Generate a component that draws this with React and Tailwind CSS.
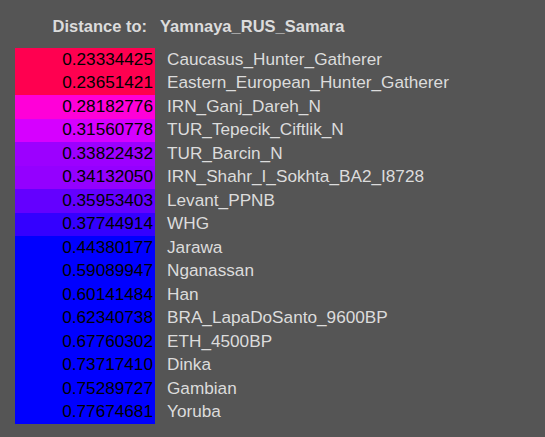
const target = 'Yamnaya_RUS_Samara'

const rows = [
  { d: '0.23334425', name: 'Caucasus_Hunter_Gatherer', bg: 'bg-[#ff0050]' },
  { d: '0.23651421', name: 'Eastern_European_Hunter_Gatherer', bg: 'bg-[#ff0050]' },
  { d: '0.28182776', name: 'IRN_Ganj_Dareh_N', bg: 'bg-[#ff00d8]' },
  { d: '0.31560778', name: 'TUR_Tepecik_Ciftlik_N', bg: 'bg-[#d600ff]' },
  { d: '0.33822432', name: 'TUR_Barcin_N', bg: 'bg-[#9c00ff]' },
  { d: '0.34132050', name: 'IRN_Shahr_I_Sokhta_BA2_I8728', bg: 'bg-[#9400ff]' },
  { d: '0.35953403', name: 'Levant_PPNB', bg: 'bg-[#6400ff]' },
  { d: '0.37744914', name: 'WHG', bg: 'bg-[#3400ff]' },
  { d: '0.44380177', name: 'Jarawa', bg: 'bg-[#0000ff]' },
  { d: '0.59089947', name: 'Nganassan', bg: 'bg-[#0000ff]' },
  { d: '0.60141484', name: 'Han', bg: 'bg-[#0000ff]' },
  { d: '0.62340738', name: 'BRA_LapaDoSanto_9600BP', bg: 'bg-[#0000ff]' },
  { d: '0.67760302', name: 'ETH_4500BP', bg: 'bg-[#0000ff]' },
  { d: '0.73717410', name: 'Dinka', bg: 'bg-[#0000ff]' },
  { d: '0.75289727', name: 'Gambian', bg: 'bg-[#0000ff]' },
  { d: '0.77674681', name: 'Yoruba', bg: 'bg-[#0000ff]' },
]

export default function App() {
  return (
    <div className="w-[545px] h-[437px] bg-[#555555] pl-[15px] pt-[17px] text-[17.2px] text-[#dcdcdc] font-['Liberation_Sans',Arial,sans-serif] overflow-hidden">
      {/* header */}
      <div className="flex text-[16.5px] leading-[18px] font-bold">
        <div className="w-[132px] text-right">Distance to:</div>
        <div className="ml-[13px]">{target}</div>
      </div>

      {/* rows */}
      <div className="mt-[13px] flex flex-col">
        {rows.map((r) => (
          <div key={r.name} className="flex h-[23.5px] items-center">
            <div className={`w-[140px] h-full flex items-center justify-end pr-[2px] text-black ${r.bg}`}>{r.d}</div>
            <div className="ml-[12px]">{r.name}</div>
          </div>
        ))}
      </div>
    </div>
  )
}
